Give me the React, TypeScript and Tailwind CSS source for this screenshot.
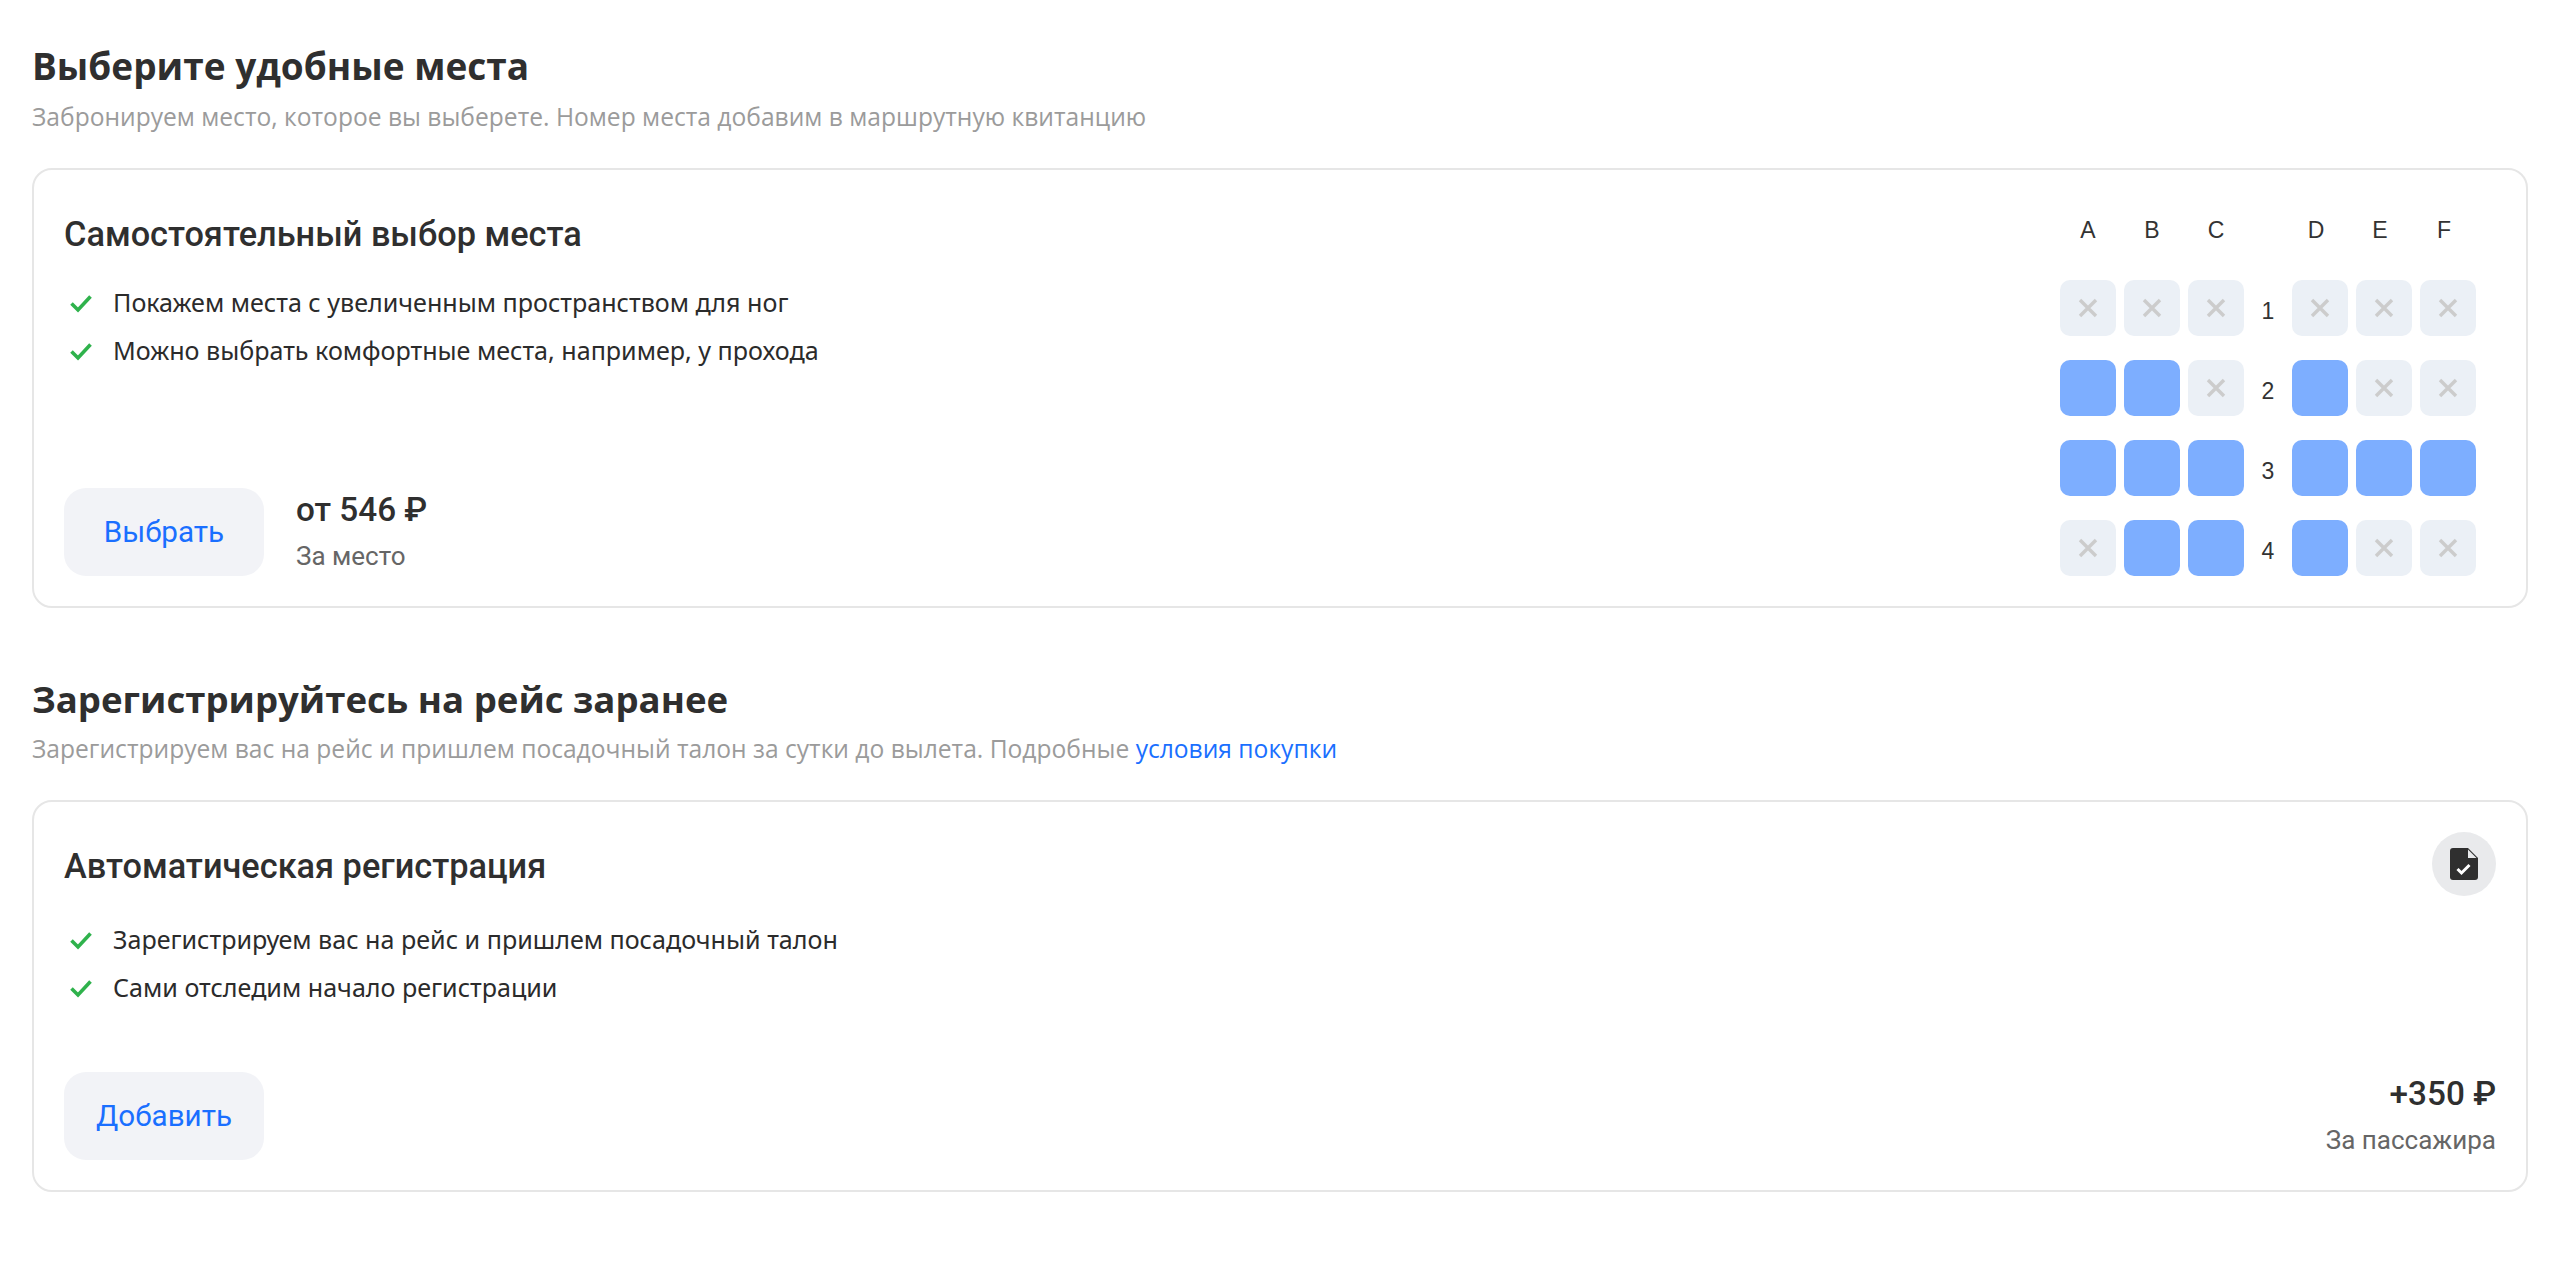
const SEAT_ROWS = [
  { row: 1, left: [0, 0, 0], right: [0, 0, 0] },
  { row: 2, left: [1, 1, 0], right: [1, 0, 0] },
  { row: 3, left: [1, 1, 1], right: [1, 1, 1] },
  { row: 4, left: [0, 1, 1], right: [1, 0, 0] },
];

function Check() {
  return (
    <svg width="24" height="24" viewBox="0 0 24 24" fill="none" className="shrink-0">
      <path d="M2.5 12.5l6.5 6.5L21.5 5.5" stroke="#2fb24c" strokeWidth="3.6" />
    </svg>
  );
}

function Seat({ free }: { free: number }) {
  if (free) return <div className="h-14 w-14 rounded-[10px] bg-[#7daeff]" />;
  return (
    <div className="flex h-14 w-14 items-center justify-center rounded-[10px] bg-[#ebf0f6]">
      <svg width="20" height="20" viewBox="0 0 20 20" fill="none">
        <path d="M2 2l16 16M18 2L2 18" stroke="#cccccc" strokeWidth="3.4" />
      </svg>
    </div>
  );
}

function SeatMap() {
  return (
    <div className="mr-5 font-['Liberation_Sans',sans-serif] text-[23px] text-[#333333]">
      <div className="mb-5 grid h-[60px] grid-cols-[56px_56px_56px_28px_56px_56px_56px] items-center gap-x-2 text-center">
        <span>A</span>
        <span>B</span>
        <span>C</span>
        <span />
        <span>D</span>
        <span>E</span>
        <span>F</span>
      </div>
      <div className="grid grid-cols-[56px_56px_56px_32px_56px_56px_56px] gap-x-2 gap-y-6">
        {SEAT_ROWS.map((r) => (
          <div key={r.row} className="contents">
            {r.left.map((s, i) => (
              <Seat key={i} free={s} />
            ))}
            <span className="flex items-center justify-center pt-[7px]">{r.row}</span>
            {r.right.map((s, i) => (
              <Seat key={i} free={s} />
            ))}
          </div>
        ))}
      </div>
    </div>
  );
}

function Perks({ items }: { items: string[] }) {
  return (
    <ul className="flex flex-col gap-2">
      {items.map((item) => (
        <li key={item} className="flex h-10 items-center gap-[20px] pl-[5px] font-['Noto_Sans',sans-serif] text-[25.1px] text-[#2b2b2b]">
          <Check />
          {item}
        </li>
      ))}
    </ul>
  );
}

function Action({ label }: { label: string }) {
  return (
    <button className="flex h-[88px] w-[200px] items-center justify-center rounded-[22px] bg-[#f2f3f7] font-['Roboto',sans-serif] text-[29.6px] text-[#1a6fff]">
      {label}
    </button>
  );
}

export default function App() {
  return (
    <div className="min-h-[1265px] bg-white px-8 pt-[42px] font-['Open_Sans',sans-serif]">
      <h2 className="text-[37px] leading-[48px] font-bold text-[#2f2f2f]">Выберите удобные места</h2>
      <p className="mt-[9px] text-[24.6px] leading-9 text-[#9b9b9b]">
        Забронируем место, которое вы выберете. Номер места добавим в маршрутную квитанцию
      </p>

      <section className="mt-[33px] flex h-[440px] justify-between rounded-[20px] border-2 border-[#e6e6e6] p-[30px]">
        <div className="flex flex-col">
          <h3 className="mt-[14px] font-['Roboto',sans-serif] text-[34.3px] leading-10 font-medium text-[#2f2f2f]">Самостоятельный выбор места</h3>
          <div className="mt-[29px]">
            <Perks items={['Покажем места с увеличенным пространством для ног', 'Можно выбрать комфортные места, например, у прохода']} />
          </div>
          <div className="mt-auto flex items-center gap-8">
            <Action label="Выбрать" />
            <div className="font-['Roboto',sans-serif]">
              <div className="text-[33.3px] leading-10 font-medium text-[#2f2f2f]">от 546 ₽</div>
              <div className="mt-2 text-[26px] leading-9 text-[#666666]">За место</div>
            </div>
          </div>
        </div>
        <SeatMap />
      </section>

      <h2 className="mt-[67px] text-[36.6px] leading-[48px] font-bold text-[#2f2f2f]">Зарегистрируйтесь на рейс заранее</h2>
      <p className="mt-2 text-[24.6px] leading-9 text-[#9b9b9b]">
        Зарегистрируем вас на рейс и пришлем посадочный талон за сутки до вылета. Подробные <a className="text-[#1a6fff]">условия покупки</a>
      </p>

      <section className="mt-[33px] flex h-[392px] flex-col rounded-[20px] border-2 border-[#e6e6e6] p-[30px]">
        <div className="flex items-start justify-between">
          <h3 className="mt-[14px] font-['Roboto',sans-serif] text-[34.3px] leading-10 font-medium text-[#2f2f2f]">Автоматическая регистрация</h3>
          <div className="flex h-16 w-16 items-center justify-center rounded-full bg-[#e9eaec]">
            <svg width="28" height="32" viewBox="0 0 28 32">
              <path d="M3 0h15l10 10v19a3 3 0 0 1-3 3H3a3 3 0 0 1-3-3V3a3 3 0 0 1 3-3z" fill="#2f2f2f" />
              <path d="M18 1.5L26.5 10H18z" fill="#e9eaec" />
              <path d="M7.5 21l4 4 8-8" stroke="#ffffff" strokeWidth="3" fill="none" />
            </svg>
          </div>
        </div>
        <div className="mt-6">
          <Perks items={['Зарегистрируем вас на рейс и пришлем посадочный талон', 'Сами отследим начало регистрации']} />
        </div>
        <div className="mt-auto flex items-center justify-between">
          <Action label="Добавить" />
          <div className="text-right font-['Roboto',sans-serif]">
            <div className="text-[33.3px] leading-10 font-medium text-[#2f2f2f]">+350 ₽</div>
            <div className="mt-2 text-[26px] leading-9 text-[#666666]">За пассажира</div>
          </div>
        </div>
      </section>
    </div>
  );
}
